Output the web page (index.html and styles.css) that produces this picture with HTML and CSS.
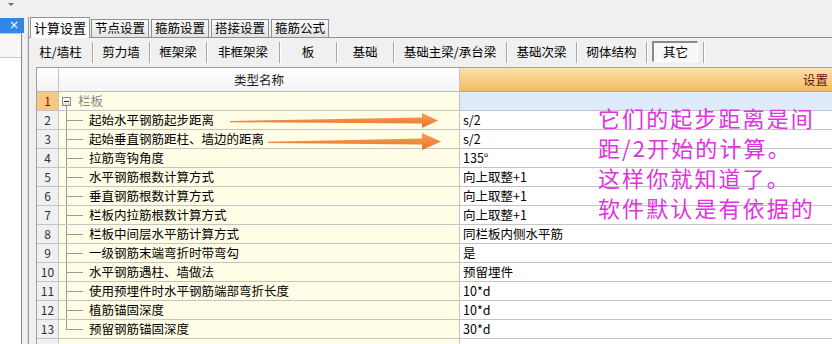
FILE: index.html
```html
<!DOCTYPE html>
<html lang="zh">
<head>
<meta charset="utf-8">
<link rel="stylesheet" href="styles.css">
</head>
<body>
<div class="app">
  <aside class="side">
    <div class="side-top"><span class="caret"></span></div>
    <div class="side-title">×</div>
    <div class="side-body">
      <div class="side-pane"><div class="side-head"></div></div>
      <div class="side-gap"></div>
    </div>
  </aside>
  <main class="main">
    <div class="tabctl">
      <div class="tabs">
        <div class="tab active">计算设置</div>
        <div class="tab first">节点设置</div>
        <div class="tab">箍筋设置</div>
        <div class="tab">搭接设置</div>
        <div class="tab">箍筋公式</div>
      </div>
      <div class="panel">
        <div class="subtabs">
          <div class="sub w64">柱/墙柱</div>
          <div class="sub w57">剪力墙</div>
          <div class="sub w57">框架梁</div>
          <div class="sub w73">非框架梁</div>
          <div class="sub w57">板</div>
          <div class="sub w57">基础</div>
          <div class="sub w113">基础主梁/承台梁</div>
          <div class="sub w70">基础次梁</div>
          <div class="sub w70">砌体结构</div>
          <div class="sub w57"><span class="pressed">其它</span></div>
        </div>
        <div class="grid">
          <div class="row head">
            <div class="c-num"></div>
            <div class="c-name">类型名称</div>
            <div class="c-val">设置</div>
          </div>
          <div class="row sel">
            <div class="c-num">1</div>
            <div class="c-name group"><span class="toggle"><span class="box"></span><span class="stub"></span></span><span class="gtext">栏板</span></div>
            <div class="c-val"></div>
          </div>
          <div class="row"><div class="c-num">2</div><div class="c-name"><span class="branch"></span>起始水平钢筋起步距离</div><div class="c-val">s/2</div></div>
          <div class="row"><div class="c-num">3</div><div class="c-name"><span class="branch"></span>起始垂直钢筋距柱、墙边的距离</div><div class="c-val">s/2</div></div>
          <div class="row"><div class="c-num">4</div><div class="c-name"><span class="branch"></span>拉筋弯钩角度</div><div class="c-val">135°</div></div>
          <div class="row"><div class="c-num">5</div><div class="c-name"><span class="branch"></span>水平钢筋根数计算方式</div><div class="c-val">向上取整+1</div></div>
          <div class="row"><div class="c-num">6</div><div class="c-name"><span class="branch"></span>垂直钢筋根数计算方式</div><div class="c-val">向上取整+1</div></div>
          <div class="row"><div class="c-num">7</div><div class="c-name"><span class="branch"></span>栏板内拉筋根数计算方式</div><div class="c-val">向上取整+1</div></div>
          <div class="row"><div class="c-num">8</div><div class="c-name"><span class="branch"></span>栏板中间层水平筋计算方式</div><div class="c-val">同栏板内侧水平筋</div></div>
          <div class="row"><div class="c-num">9</div><div class="c-name"><span class="branch"></span>一级钢筋末端弯折时带弯勾</div><div class="c-val">是</div></div>
          <div class="row"><div class="c-num">10</div><div class="c-name"><span class="branch"></span>水平钢筋遇柱、墙做法</div><div class="c-val">预留埋件</div></div>
          <div class="row"><div class="c-num">11</div><div class="c-name"><span class="branch"></span>使用预埋件时水平钢筋端部弯折长度</div><div class="c-val">10*d</div></div>
          <div class="row"><div class="c-num">12</div><div class="c-name"><span class="branch"></span>植筋锚固深度</div><div class="c-val">10*d</div></div>
          <div class="row"><div class="c-num">13</div><div class="c-name"><span class="branch last"></span>预留钢筋锚固深度</div><div class="c-val">30*d</div></div>
          <div class="row"><div class="c-num"></div><div class="c-name"><span class="toggle"><span class="box plain"></span></span></div><div class="c-val"></div></div>
        </div>
      </div>
    </div>
  </main>
</div>
<svg class="arrows" width="832" height="344" viewBox="0 0 832 344">
  <defs>
    <linearGradient id="ag" x1="0" y1="0" x2="0" y2="1">
      <stop offset="0" stop-color="#f7a055"/>
      <stop offset="1" stop-color="#ea7428"/>
    </linearGradient>
  </defs>
  <polygon fill="url(#ag)" points="230,121 422,117.5 422,113 438,120.5 422,128 422,123.5 230,122.2"/>
  <polygon fill="url(#ag)" points="268,141.8 422,138.5 422,133 441,141.5 422,150 422,144.5 268,143"/>
</svg>
<div class="note">
  <div>它们的起步距离是间</div>
  <div>距/2开始的计算。</div>
  <div>这样你就知道了。</div>
  <div>软件默认是有依据的</div>
</div>
</body>
</html>
```
FILE: styles.css
```css
* { box-sizing: border-box; }
html, body { margin: 0; padding: 0; }
body {
  width: 832px;
  height: 344px;
  overflow: hidden;
  position: relative;
  background: #f0f0f0;
  font-family: "Noto Sans CJK SC", "Noto Sans", sans-serif;
  font-size: 12px;
  color: #000;
}
.app { display: flex; height: 344px; }

/* left docked panel */
.side { width: 28px; display: flex; flex-direction: column; flex: none; }
.side-top { height: 18px; padding: 3px 0 0 8px; }
.caret {
  display: block; width: 0; height: 0;
  border-left: 3px solid transparent;
  border-right: 3px solid transparent;
  border-top: 3px solid #6a6a6a;
}
.side-title {
  height: 15px; width: 24px;
  background: #3286e6;
  color: #fff;
  font-family: "DejaVu Sans", sans-serif;
  font-size: 12px;
  line-height: 14px;
  text-align: right;
  padding-right: 5px;
}
.side-body { flex: 1; display: flex; }
.side-pane {
  width: 22px;
  background: #fff;
  border-right: 1px solid #828790;
  border-top: 1px solid #c9c9c9;
}
.side-head { height: 24px; background: #f7f7f7; border-bottom: 1px solid #c9c9c9; }
.side-gap { flex: 1; border-right: 1px solid #dadada; }

/* main tab control */
.main { flex: 1; padding-top: 17px; min-width: 0; }
.tabctl { border-left: 1px solid #9a9a9a; height: 327px; display: flex; flex-direction: column; }
.tabs { height: 20px; display: flex; align-items: flex-end; padding-left: 1px; }
.tab {
  width: 58px; height: 18px;
  margin-left: 2px;
  border: 1px solid #8d9095;
  border-bottom: none;
  background: linear-gradient(#fbfbfb, #e3e3e3);
  text-align: center;
  line-height: 16px;
  font-size: 12.5px;
}
.tab.first { margin-left: 1px; }
.tab.active {
  width: 60px; height: 21px;
  margin-left: 0;
  margin-bottom: -1px;
  background: #fff;
  position: relative;
  z-index: 1;
  line-height: 20px;
  font-size: 13px;
}
.panel { flex: 1; border-top: 1px solid #8d9095; display: flex; flex-direction: column; min-height: 0; }

.subtabs { height: 29px; display: flex; padding-top: 4px; flex: none; }
.sub {
  height: 21px;
  border-right: 1px solid #a8a8a8;
  box-shadow: 1px 0 0 #ffffff;
  text-align: center;
  line-height: 20px;
  font-size: 12.5px;
}
.w57 { width: 57px; }
.w64 { width: 64px; }
.w70 { width: 70px; }
.w73 { width: 73px; }
.w113 { width: 113px; }
.pressed {
  display: block;
  margin: -1px 5px 0 5px;
  height: 21px;
  border-top: 2px solid #8a8a8a;
  border-left: 2px solid #8a8a8a;
  border-right: 1px solid #ffffff;
  border-bottom: 1px solid #ffffff;
  background: #f8f8f8;
  line-height: 18px;
}

/* grid */
.grid {
  margin-left: 7px;
  border-left: 1px solid #a0a0a0;
  border-top: 1px solid #a0a0a0;
  overflow: hidden;
  flex: 1;
  background: #fff;
}
.row {
  display: grid;
  grid-template-columns: 22px 401px 720px;
  height: 19px;
}
.row > div { border-bottom: 1px solid #c4c4c4; white-space: nowrap; overflow: hidden; }
.c-num {
  background: #f0f0f0;
  border-right: 1px solid #c4c4c4;
  text-align: center;
  line-height: 18px;
  font-size: 12px;
  color: #303030;
}
.c-name {
  background: #fffde6;
  border-right: 1px solid #c4c4c4;
  display: flex;
  align-items: center;
  padding-left: 7px;
  line-height: 18px;
  font-size: 12.5px;
}
.c-val {
  line-height: 18px;
  padding-left: 3px;
  font-size: 12.5px;
}
.row.head { height: 24px; }
.row.head > div { border-bottom: 1px solid #b8b8b8; }
.row.head .c-num { background: linear-gradient(#ffffff, #f3f3f3); }
.row.head .c-name {
  background: linear-gradient(#ffffff, #f4f4f4);
  justify-content: center;
  padding-left: 0;
  line-height: 23px;
  color: #202020;
}
.row.head .c-val {
  background: linear-gradient(#fbe2ac, #f4bb62);
  border-bottom-color: #e0a24c;
  color: #6a0f0f;
  padding-left: 343px;
  line-height: 23px;
  font-size: 12.5px;
}
.row.sel .c-num { background: #f9c784; color: #8a0d0d; }
.row.sel .c-val { background: #deebfa; }

.branch {
  align-self: stretch;
  width: 17px;
  margin-right: 6px;
  display: flex;
  flex-direction: column;
  flex: none;
}
.branch::before {
  content: "";
  flex: 1;
  border-left: 1px solid #9a9a9a;
  border-bottom: 1px solid #9a9a9a;
}
.branch::after {
  content: "";
  flex: 1;
  border-left: 1px solid #9a9a9a;
}
.branch.last::after { border-left: none; }

.c-name.group { padding-left: 3px; }
.toggle {
  align-self: stretch;
  width: 9px;
  display: flex;
  flex-direction: column;
  align-items: center;
  padding-top: 5px;
  flex: none;
}
.box {
  width: 9px; height: 9px;
  border: 1px solid #8a8a8a;
  background: linear-gradient(#ffffff, #dcdcdc);
  display: flex;
  align-items: center;
  justify-content: center;
  flex: none;
}
.box::before { content: ""; width: 5px; height: 1px; background: #333; }
.box.plain::before { display: none; }
.stub { flex: 1; width: 1px; background: #9a9a9a; }
.gtext { margin-left: 7px; color: #8a8a8a; }

/* overlays */
.arrows { position: absolute; left: 0; top: 0; pointer-events: none; }
.note {
  position: absolute;
  left: 598px;
  top: 102px;
  color: #e033e0;
  font-size: 22px;
  line-height: 30px;
  letter-spacing: 2.1px;
  font-family: "Noto Sans CJK SC", sans-serif;
  white-space: nowrap;
}
```
